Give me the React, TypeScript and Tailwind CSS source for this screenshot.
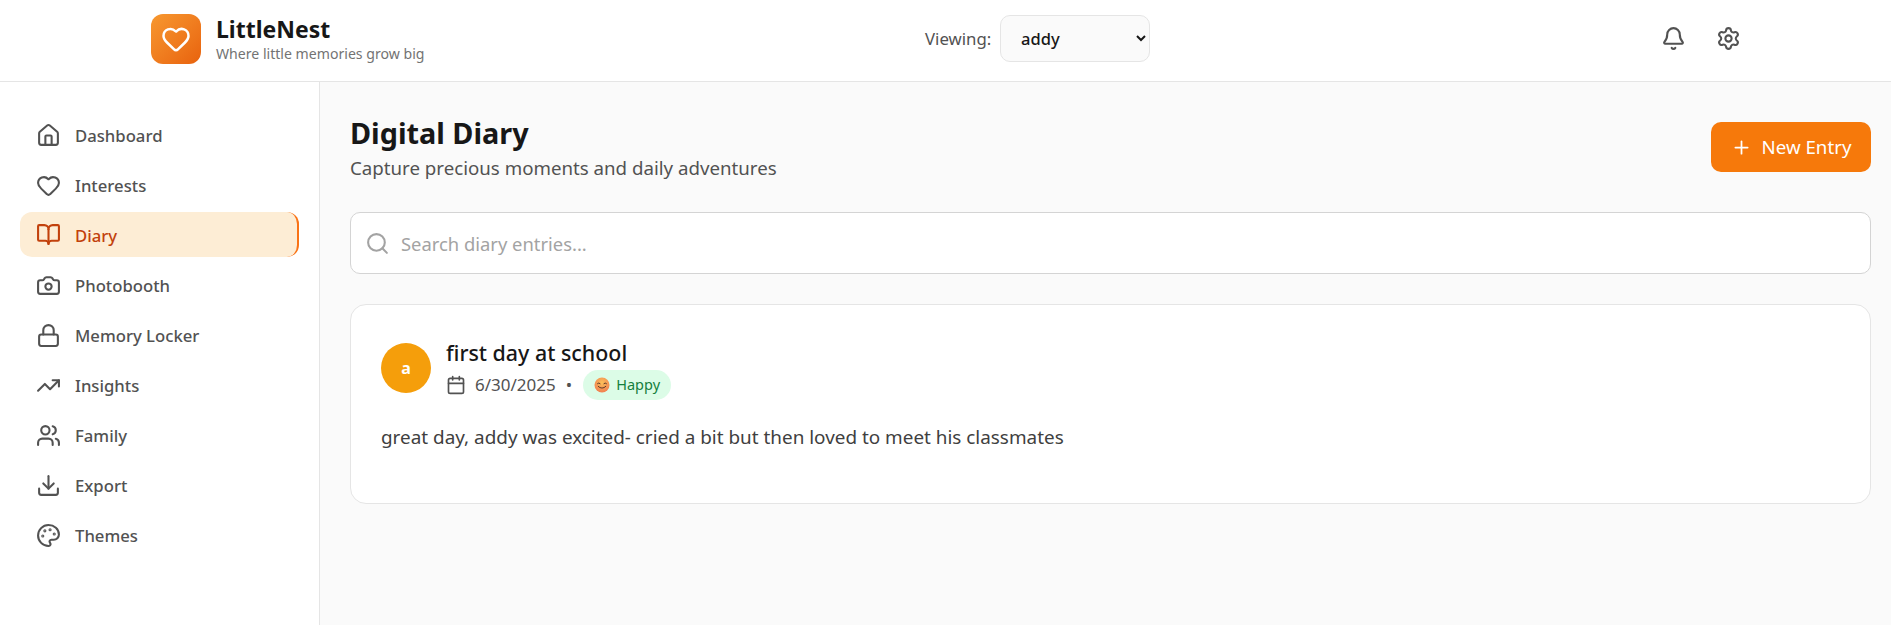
import {
  Bell,
  BookOpen,
  Calendar,
  Camera,
  Download,
  Heart,
  House,
  Lock,
  Palette,
  Plus,
  Search,
  Settings,
  TrendingUp,
  Users,
} from "lucide-react";

const navItems = [
  { label: "Dashboard", icon: House },
  { label: "Interests", icon: Heart },
  { label: "Diary", icon: BookOpen, active: true },
  { label: "Photobooth", icon: Camera },
  { label: "Memory Locker", icon: Lock },
  { label: "Insights", icon: TrendingUp },
  { label: "Family", icon: Users },
  { label: "Export", icon: Download },
  { label: "Themes", icon: Palette },
];

function SmileEmoji() {
  return (
    <svg width="16" height="16" viewBox="0 0 16 16" className="shrink-0">
      <defs>
        <radialGradient id="smile" cx="50%" cy="35%" r="70%">
          <stop offset="0%" stopColor="#fbc15a" />
          <stop offset="100%" stopColor="#f0794f" />
        </radialGradient>
      </defs>
      <circle cx="8" cy="8" r="7.5" fill="url(#smile)" />
      <path d="M3.5 6.6q1.3-1.4 2.6 0M9.9 6.6q1.3-1.4 2.6 0" fill="none" stroke="#5b3a2a" strokeWidth="1" strokeLinecap="round" />
      <path d="M4.2 9.4q3.8 3.6 7.6 0" fill="none" stroke="#5b3a2a" strokeWidth="1" strokeLinecap="round" />
    </svg>
  );
}

export default function App() {
  return (
    <div className="flex h-[625px] flex-col overflow-hidden bg-[#fafafa] font-['Noto_Sans','Open_Sans',sans-serif] text-[#171717]">
      <header className="flex h-[82px] shrink-0 items-center border-b border-[#e5e5e5] bg-white pb-[4px] pl-[151px] pr-[150px]">
        <div className="flex w-[400px] items-center gap-[15px]">
          <div className="flex h-[50px] w-[50px] items-center justify-center rounded-[12px] bg-gradient-to-br from-[#f7982f] to-[#e8620c]">
            <Heart className="h-[30px] w-[30px] text-white" strokeWidth={2} />
          </div>
          <div className="pt-[1px]">
            <div className="text-[23px] font-bold leading-[30px] text-[#171717]">LittleNest</div>
            <div className="text-[14.1px] leading-[20px] text-[#737373]">Where little memories grow big</div>
          </div>
        </div>
        <div className="ml-[374px] flex items-center gap-[8px]">
          <span className="w-[67px] text-[16.8px] text-[#525252]">Viewing:</span>
          <select className="h-[47px] w-[150px] rounded-[10px] border border-[#e5e5e5] bg-[#fafafa] px-[16px] text-[16.5px] font-medium text-[#171717]">
            <option>addy</option>
          </select>
        </div>
        <div className="ml-auto flex items-center gap-[30px]">
          <Bell className="h-[25px] w-[25px] text-[#525252]" strokeWidth={2} />
          <Settings className="h-[25px] w-[25px] text-[#525252]" strokeWidth={2} />
        </div>
      </header>

      <div className="flex min-h-0 flex-1">
        <aside className="w-[320px] shrink-0 border-r border-[#e5e5e5] bg-white px-[20px] pt-[31px]">
          <nav className="flex flex-col gap-[5px]">
            {navItems.map((item) => {
              const Icon = item.icon;
              return (
                <div
                  key={item.label}
                  className={
                    item.active
                      ? "-mt-[1px] mb-[1px] flex h-[45px] items-center gap-[14px] rounded-[12px] border-r-2 border-[#f97316] bg-[#fdedd5] px-[16px] text-[#c2410c]"
                      : "flex h-[45px] items-center gap-[14px] rounded-[12px] px-[16px] text-[#525252]"
                  }
                >
                  <Icon className="h-[25px] w-[25px] shrink-0" strokeWidth={2} />
                  <span className={item.active ? "pt-[2px] text-[16.7px] font-medium" : "text-[16.7px] font-medium"}>
                    {item.label}
                  </span>
                </div>
              );
            })}
          </nav>
        </aside>

        <main className="min-w-0 flex-1 pl-[30px] pr-[20px] pt-[32px]">
          <div className="flex items-center justify-between">
            <div>
              <h1 className="text-[28.8px] font-bold leading-[38px] text-[#171717]">Digital Diary</h1>
              <p className="mt-[4px] text-[18.7px] leading-[24px] text-[#525252]">Capture precious moments and daily adventures</p>
            </div>
            <button className="flex h-[50px] w-[160px] items-center justify-center gap-[10px] rounded-[10px] bg-[#f6790b] text-[18.7px] text-white">
              <Plus className="h-[21px] w-[21px]" strokeWidth={2} />
              New Entry
            </button>
          </div>

          <div className="mt-[32px] flex h-[62px] items-center gap-[11px] rounded-[10px] border border-[#d4d4d4] bg-white px-[14px]">
            <Search className="h-[25px] w-[25px] text-[#a3a3a3]" strokeWidth={2} />
            <input
              placeholder="Search diary entries..."
              className="flex-1 bg-transparent pt-[1px] text-[18.4px] outline-none placeholder:text-[#a3a3a3]"
            />
          </div>

          <article className="mt-[30px] h-[200px] rounded-[16px] border border-[#e5e5e5] bg-white p-[30px]">
            <div className="flex items-start gap-[15px]">
              <div className="mt-[8px] flex h-[50px] w-[50px] items-center justify-center rounded-full bg-[#f59e0b] text-[16px] font-bold text-white">
                a
              </div>
              <div className="pt-[4px]">
                <h2 className="text-[21.4px] font-medium leading-[28px] text-[#171717]">first day at school</h2>
                <div className="mt-[3px] flex items-center text-[17px] text-[#525252]">
                  <Calendar className="h-[20px] w-[20px]" strokeWidth={2} />
                  <span className="ml-[9px]">6/30/2025</span>
                  <span className="ml-[10px]">•</span>
                  <span className="ml-[11px] flex h-[30px] w-[88px] items-center justify-center gap-[6px] rounded-full bg-[#dcfce7] text-[14.5px] text-[#15803d]">
                    <SmileEmoji />
                    Happy
                  </span>
                </div>
              </div>
            </div>
            <p className="mt-[23px] text-[18.9px] leading-[28px] text-[#404040]">
              great day, addy was excited- cried a bit but then loved to meet his classmates
            </p>
          </article>
        </main>
      </div>
    </div>
  );
}
